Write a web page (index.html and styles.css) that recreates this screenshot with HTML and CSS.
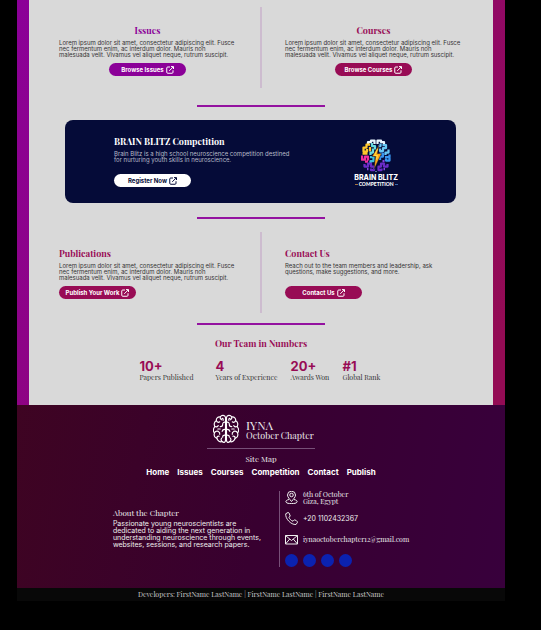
FILE: index.html
```html
<!DOCTYPE html>
<html lang="en">
<head>
<meta charset="utf-8">
<title>IYNA October Chapter</title>
<link rel="stylesheet" href="styles.css">
</head>
<body>
<svg class="defs" aria-hidden="true">
  <symbol id="external" viewBox="0 0 16 16">
    <path d="M8 2H3.5Q1.500 2 1.500 4V12.500Q1.500 14.500 3.500 14.500H12Q14 14.500 14 12.500V8.500M10 1.200H15V6M14.500 1.700L6.500 9.700" fill="none" stroke="currentColor" stroke-width="2"/>
  </symbol>
</svg>
<div class="page">
  <main class="frame">
    <div class="panel">
      <section class="pair">
        <article class="card card-centered">
          <h2 class="title violet">Issues</h2>
          <p class="copy">Lorem ipsum dolor sit amet, consectetur adipiscing elit. Fusce<br>nec fermentum enim, ac interdum dolor. Mauris non<br>malesuada velit. Vivamus vel aliquet neque, rutrum suscipit.</p>
          <button class="btn btn-violet" type="button">Browse Issues <svg class="ext"><use href="#external"/></svg></button>
        </article>
        <article class="card card-centered card-right">
          <h2 class="title">Courses</h2>
          <p class="copy">Lorem ipsum dolor sit amet, consectetur adipiscing elit. Fusce<br>nec fermentum enim, ac interdum dolor. Mauris non<br>malesuada velit. Vivamus vel aliquet neque, rutrum suscipit.</p>
          <button class="btn" type="button">Browse Courses <svg class="ext"><use href="#external"/></svg></button>
        </article>
      </section>
      <hr class="rule">
      <section class="banner">
        <div class="banner-text">
          <h2 class="title light">BRAIN BLITZ Competition</h2>
          <p class="copy">Brain Blitz is a high school neuroscience competition destined<br>for nurturing youth skills in neuroscience.</p>
          <button class="btn btn-white" type="button">Register Now <svg class="ext"><use href="#external"/></svg></button>
        </div>
        <div class="blitz">
          <svg class="blitz-brain" viewBox="0 0 60 66" fill="none" stroke-width="4.500" stroke-linejoin="round" aria-hidden="true">
            <path stroke="#e9f7ff" d="M14 9V5H20V2H27V9M33 9V2H40V5H46V9"/>
            <path stroke="#ffc72b" d="M18 10H11V16H5V24H12V19M18 15V24M3 28H13"/>
            <path stroke="#67dbe0" d="M22 7V13H28V20M24 18V26H19V31"/>
            <path stroke="#f32f9c" d="M2 32V40H8V34H14V42M8 44H14"/>
            <path stroke="#3fc2dd" d="M18 35H25V43H19V47"/>
            <path stroke="#68c8f5" d="M34 13H39V8M43 11H50V17H44V23H38V18M55 20V26H49V31"/>
            <path stroke="#3894ed" d="M37 28H44V34H38V41M48 35H57V30M57 36V42H50V38"/>
            <path stroke="#6a2cc7" d="M7 49V54H14V48H20V54H26V61H20V58M53 49V54H46V48H40V54H35V61H41V58"/>
            <path stroke="#8743e3" d="M43 43H47M12 59H15M45 59H48"/>
            <path fill="#ffa914" stroke="#080c38" stroke-width="1" d="M36 11L22 34H29L26 60L41 28H33Z"/>
            <path stroke="#ffdf4b" stroke-width="2" d="M33 19L27 32H33L31 40"/>
            <path stroke="#b5d5ff" stroke-width="2" d="M30 63V65"/>
          </svg>
          <strong class="blitz-name">BRAIN BLITZ</strong>
          <span class="blitz-sub">COMPETITION</span>
        </div>
      </section>
      <hr class="rule">
      <section class="pair pair-low">
        <article class="card">
          <h2 class="title">Publications</h2>
          <p class="copy">Lorem ipsum dolor sit amet, consectetur adipiscing elit. Fusce<br>nec fermentum enim, ac interdum dolor. Mauris non<br>malesuada velit. Vivamus vel aliquet neque, rutrum suscipit.</p>
          <button class="btn" type="button">Publish Your Work <svg class="ext"><use href="#external"/></svg></button>
        </article>
        <article class="card card-right">
          <h2 class="title">Contact Us</h2>
          <p class="copy">Reach out to the team members and leadership, ask<br>questions, make suggestions, and more.</p>
          <button class="btn" type="button">Contact Us <svg class="ext"><use href="#external"/></svg></button>
        </article>
      </section>
      <hr class="rule">
      <section class="team">
        <h2 class="title">Our Team in Numbers</h2>
        <dl class="stats">
          <div><dd>10+</dd><dt>Papers Published</dt></div>
          <div><dd>4</dd><dt>Years of Experience</dt></div>
          <div><dd>20+</dd><dt>Awards Won</dt></div>
          <div><dd>#1</dd><dt>Global Rank</dt></div>
        </dl>
      </section>
    </div>
  </main>
  <footer>
    <div class="foot">
      <div class="brand">
        <svg class="brain" viewBox="0 0 54 60" fill="none" stroke="#fff" stroke-width="2.400" stroke-linecap="round" stroke-linejoin="round" aria-hidden="true">
          <g id="half">
            <path d="M26 6C25 1 18 0 15 5C10 4 6 8 7 13C3 15 1 20 4 25C0 29 0 35 3 38C1 44 4 48 8 49C9 55 15 58 19 56C23 60 26 57 26 53Z"/>
            <path d="M15 5Q14 9 18 11M7 13Q10 18 14 15M26 16Q20 15 20 21Q20 25 15 25M4 25Q8 27 11 23M3 38Q6 33 11 35Q15 37 14 41M26 31Q20 30 19 35M8 49Q8 44 13 45M19 56Q15 53 18 49M26 43Q20 42 20 47M10 30H15M19 8Q22 8 21 12"/>
          </g>
          <use href="#half" transform="matrix(-1 0 0 1 54 0)"/>
        </svg>
        <div class="brand-text"><strong>IYNA</strong><span>October Chapter</span></div>
      </div>
      <h2 class="map-title">Site Map</h2>
      <nav>
        <a href="#">Home</a><a href="#">Issues</a><a href="#">Courses</a><a href="#">Competition</a><a href="#">Contact</a><a href="#">Publish</a>
      </nav>
      <div class="info">
        <section class="about">
          <h2>About the Chapter</h2>
          <p>Passionate young neuroscientists are<br>dedicated to aiding the next generation in<br>understanding neuroscience through events,<br>websites, sessions, and research papers.</p>
        </section>
        <address>
          <div class="line">
            <svg viewBox="0 0 26 26" aria-hidden="true"><path d="M13 21C9 16 5 12 5 8A8 7.500 0 0 1 21 8C21 12 17 16 13 21ZM8 17C3 18 1 20 2 22C3 25 8 25 13 25S23 25 24 22C25 20 23 18 18 17"/><circle cx="13" cy="8" r="3.500"/></svg>
            <span>6th of October<br>Giza, Egypt</span>
          </div>
          <div class="line">
            <svg viewBox="0 0 26 26" aria-hidden="true"><path d="M6 1L1.500 3.500C0 13 12 26 22 25L25 20.500Q25 19 23 17.500L19 15.500L16 18.500C12 17 9 14 8 10.500L10.500 8L8 2Q7 .5 6 1Z"/></svg>
            <span class="phone">+20 1102432367</span>
          </div>
          <div class="line">
            <svg viewBox="0 0 26 26" aria-hidden="true"><path d="M1 5H25V22H1ZM1 5L13 15L25 5M1 22L9.500 12M25 22L16.500 12"/></svg>
            <a href="mailto:iynaoctoberchapter12@gmail.com">iynaoctoberchapter12@gmail.com</a>
          </div>
          <div class="social">
            <a href="#" aria-label="Social profile 1"></a><a href="#" aria-label="Social profile 2"></a><a href="#" aria-label="Social profile 3"></a><a href="#" aria-label="Social profile 4"></a>
          </div>
        </address>
      </div>
    </div>
    <p class="credits">Developers: FirstName LastName | FirstName LastName | FirstName LastName</p>
  </footer>
</div>
</body>
</html>
```
FILE: styles.css
```css
* { box-sizing: border-box; margin: 0; padding: 0; }
body { background: #000; font-family: Inter, "Liberation Sans", sans-serif; font-size: 6px; }
.defs { display: none; }
.page { margin: 0 36px 0 17px; }
.frame { padding: 0 12px; background: linear-gradient(115deg, #8b0098, #930b54 95%); }
.panel { background: #d9d9d9; color: #333; padding: 7px 0 24px; }

h2, .stats dt, .brand-text, .line, .credits { font-family: "Playfair Display", "Liberation Serif", serif; }
.title { font-size: 9px; line-height: 12px; font-weight: 700; color: #980c55; }
.violet { color: #8b0098; }
.light { color: #fff; }
.copy { font-size: 6px; line-height: 6px; white-space: nowrap; }

.pair { display: grid; grid-template-columns: 1fr 1fr; height: 81px; }
.card { display: flex; flex-direction: column; align-items: flex-start; padding: 17px 0 0 30px; border-right: 1px solid #cdbccf; }
.card-right { padding-left: 23px; border-right: 0; border-left: 1px solid #cdbccf; }
.card .copy { min-height: 19px; margin: 4px 0; width: 177px; }
.card-centered .title { width: 177px; text-align: center; }
.card-centered .btn { margin-left: 50px; }
.pair-low .card { padding-top: 15px; }

.btn { display: flex; align-items: center; justify-content: center; gap: 2px; width: 77px; height: 13px; border: 0; border-radius: 7px; background: #980c55; color: #fff; font: 700 6px/8px Inter, "Liberation Sans", sans-serif; white-space: nowrap; }
.btn-violet { background: #8b0098; }
.btn-white { background: #fff; color: #050b38; }
.ext { width: 8px; height: 8px; }

.rule { width: 128px; height: 2px; border: 0; margin: 17px auto 13px; background: #9412a0; }
.banner { display: flex; justify-content: space-between; margin: 0 37px 0 36px; padding: 15px 58px 16px 49px; border-radius: 8px; background: #050b38; }
.banner .copy { margin: 4px 0 11px; color: #b9bbc9; }
.banner + .rule { margin-top: 14px; }
.pair-low + .rule { margin: 10px auto 12px; }
.blitz { display: flex; flex-direction: column; align-items: center; color: #fff; padding-top: 4px; }
.blitz-brain { width: 30px; height: 34px; }
.blitz-name { font: 800 7px/8px Inter, sans-serif; margin-top: 1px; }
.blitz-sub { display: flex; align-items: center; gap: 1px; font: 900 5px/5px Lato, sans-serif; }
.blitz-sub::before, .blitz-sub::after { content: ""; width: 3px; height: 1px; background: #a5743f; }
.blitz-sub::after { background: #3d6aa5; }

.team { text-align: center; }
.stats { display: grid; grid-template-columns: 76px 75px 52px 40px; justify-content: center; margin-top: 10px; text-align: left; white-space: nowrap; }
.stats > div { display: flex; flex-direction: column; }
.stats dd { font-size: 13px; line-height: 14px; font-weight: 700; color: #980c55; }
.stats dt { font-size: 7px; line-height: 8px; }

.foot { display: flex; flex-direction: column; align-items: center; padding: 9px 0 21px; background: linear-gradient(100deg, #3e0422, #380030 50%, #38003c); color: #eee; }
.brand { display: flex; gap: 7px; width: 108px; padding: 0 0 4px 6px; border-bottom: 1px solid #775078; }
.brain { width: 26px; height: 30px; flex: none; }
.brand-text { display: flex; flex-direction: column; padding-top: 5px; white-space: nowrap; }
.brand-text strong { font-size: 12px; line-height: 12px; font-weight: 400; }
.brand-text span { font-size: 9px; line-height: 9px; }
.map-title { margin-top: 5px; font-size: 8px; line-height: 10px; font-weight: 400; }
nav { display: flex; gap: 8px; margin-top: 3px; }
nav a { color: #fff; font-size: 8px; line-height: 10px; font-weight: 700; text-decoration: none; }
.info { display: flex; margin-top: 14px; }
.about { width: 166px; padding-top: 16px; white-space: nowrap; }
.about h2 { font-size: 8px; line-height: 11px; font-weight: 400; }
.about p { margin-top: 2px; font-size: 7px; line-height: 7px; }
address { display: flex; flex-direction: column; gap: 8px; padding-left: 5px; border-left: 1px solid #775078; font-style: normal; }
.line { display: flex; align-items: center; gap: 5px; height: 13px; font-size: 7px; line-height: 7px; white-space: nowrap; }
.line svg { width: 13px; height: 13px; fill: none; stroke: #eee; stroke-width: 2; }
.line a { color: inherit; text-decoration: none; }
.phone { font-family: Inter, sans-serif; }
.social { display: flex; gap: 5px; }
.social a { width: 13px; height: 13px; border-radius: 50%; background: #0b22b0; }
.credits { background: #080808; color: #ccc; text-align: center; font-size: 7px; line-height: 13px; }
```
